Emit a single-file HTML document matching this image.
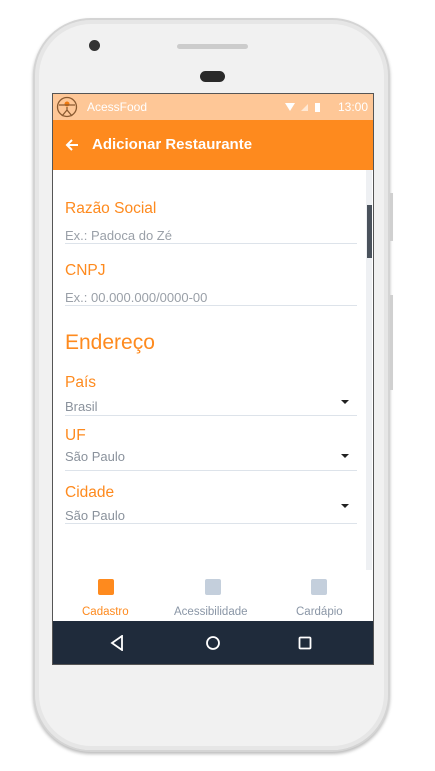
<!DOCTYPE html>
<html><head><meta charset="utf-8"><style>
body{margin:0;width:435px;height:771px;background:#fff;position:relative;overflow:hidden;font-family:"Liberation Sans",sans-serif}
.phone{position:absolute;left:33px;top:18px;width:357px;height:734px;background:#f1f1f1;border-radius:58px;border:2px solid #d4d4d4;box-sizing:border-box;box-shadow:0 2px 3px #bbb, inset 0 0 0 4px #e6e6e6}
.side{position:absolute;background:#d0d0d0;width:3px}
.screen{position:absolute;left:53px;top:94px;width:320px;height:570px;background:#fff;outline:1px solid #555;overflow:hidden}
.status{height:26px;background:#fec797;color:#fff;font-size:12px;position:relative}
.bar{height:50px;background:#fe8a1e;color:#fff;font-size:15px;font-weight:bold;position:relative}
.lab{position:absolute;left:12px;color:#fe8a1e;font-size:15.5px}
.ph{position:absolute;left:12px;color:#9aa0a8;font-size:13px}
.ln{position:absolute;left:12px;width:292px;height:1px;background:#dde3ea}
.dd{position:absolute;left:288px;width:0;height:0;border-left:4px solid transparent;border-right:4px solid transparent;border-top:4px solid #222}
.nav{position:absolute;left:0;top:527px;width:320px;height:43px;background:#1f2b3b}
.tab{position:absolute;top:485px;width:16px;height:16px;border-radius:2px;background:#c4cfdc}
.tl{position:absolute;top:512px;font-size:11.5px;color:#8a96a6}
</style></head><body>
<div class="phone"></div>
<div class="side" style="left:390px;top:193px;height:48px"></div>
<div class="side" style="left:390px;top:295px;height:95px"></div>
<div style="position:absolute;left:89px;top:40px;width:11px;height:11px;border-radius:50%;background:#333"></div>
<div style="position:absolute;left:177px;top:44px;width:71px;height:5px;border-radius:3px;background:#ccc"></div>
<div style="position:absolute;left:200px;top:71px;width:25px;height:11px;border-radius:6px;background:#2a2a2a"></div>
<div class="screen">
 <div class="status">
  <svg style="position:absolute;left:3px;top:2px" width="22" height="22" viewBox="0 0 22 22"><circle cx="11" cy="11" r="9.5" fill="none" stroke="#8a5a30" stroke-width="1.3"/><circle cx="11" cy="8" r="2.5" fill="#f07a10"/><path d="M3 9 L19 9 M11 11 L11 14 M11 14 L6 20 M11 14 L16 20" stroke="#8a5a30" stroke-width="1.3" fill="none"/></svg>
  <span style="position:absolute;left:34px;top:6px">AcessFood</span>
  <svg style="position:absolute;left:232px;top:8px" width="40" height="11"><path d="M0 1 L10 1 L5 9 Z" fill="#fff"/><path d="M16 9 L23 2 L23 9 Z" fill="#fff" opacity=".6"/><rect x="30" y="1" width="5" height="9" fill="#fff"/></svg>
  <span style="position:absolute;left:285px;top:6px">13:00</span>
 </div>
 <div class="bar">
  <svg style="position:absolute;left:12px;top:18px" width="14" height="14" viewBox="0 0 14 14"><path d="M13 7 H2 M7 2 L2 7 L7 12" stroke="#fff" stroke-width="2" fill="none"/></svg>
  <span style="position:absolute;left:39px;top:16px">Adicionar Restaurante</span>
 </div>
 <div style="position:absolute;left:313px;top:76px;width:6px;height:400px;background:#eef0f3"></div>
 <div style="position:absolute;left:314px;top:111px;width:5px;height:53px;background:#4a525c"></div>
 <div class="lab" style="top:106px">Razão Social</div>
 <div class="ph" style="top:134px">Ex.: Padoca do Zé</div>
 <div class="ln" style="top:149px"></div>
 <div class="lab" style="top:168px">CNPJ</div>
 <div class="ph" style="top:196px">Ex.: 00.000.000/0000-00</div>
 <div class="ln" style="top:211px"></div>
 <div class="lab" style="top:237px;font-size:21px">Endereço</div>
 <div class="lab" style="top:280px">País</div>
 <div class="ph" style="top:305px;color:#8a929c">Brasil</div>
 <div class="dd" style="top:306px"></div>
 <div class="ln" style="top:321px"></div>
 <div class="lab" style="top:333px">UF</div>
 <div class="ph" style="top:355px;color:#8a929c">São Paulo</div>
 <div class="dd" style="top:360px"></div>
 <div class="ln" style="top:376px"></div>
 <div class="lab" style="top:390px">Cidade</div>
 <div class="ph" style="top:414px;color:#8a929c">São Paulo</div>
 <div class="dd" style="top:410px"></div>
 <div class="ln" style="top:429px"></div>
 <div class="tab" style="left:45px;background:#fe8a1e"></div>
 <div class="tab" style="left:152px"></div>
 <div class="tab" style="left:258px"></div>
 <div class="tl" style="left:29px;color:#fe8a1e">Cadastro</div>
 <div class="tl" style="left:121px">Acessibilidade</div>
 <div class="tl" style="left:243px">Cardápio</div>
 <div class="nav">
  <svg style="position:absolute;left:57px;top:14px" width="14" height="16"><path d="M12 1 L2 8 L12 15 Z" stroke="#fff" stroke-width="1.8" fill="none"/></svg>
  <svg style="position:absolute;left:152px;top:14px" width="16" height="16"><circle cx="8" cy="8" r="6" stroke="#fff" stroke-width="1.8" fill="none"/></svg>
  <svg style="position:absolute;left:245px;top:15px" width="14" height="14"><rect x="1.5" y="1.5" width="11" height="11" rx="1" stroke="#fff" stroke-width="1.8" fill="none"/></svg>
 </div>
</div>
</body></html>
